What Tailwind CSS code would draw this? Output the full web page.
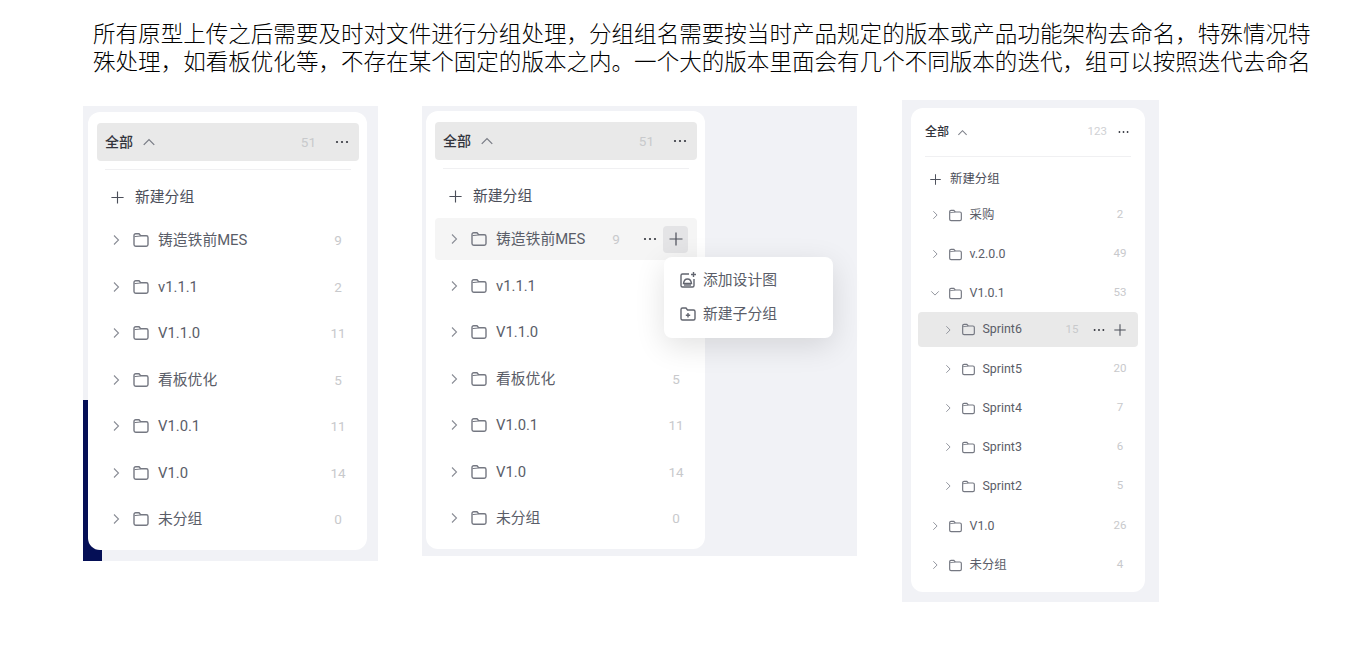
<!DOCTYPE html>
<html lang="zh-CN">
<head>
    <meta charset="UTF-8">
    <title>分组</title>
    <script src="https://cdn.jsdelivr.net/npm/@tailwindcss/browser@4"></script>
</head>
<body class="bg-white h-[652px] overflow-hidden font-[Roboto,'Noto_Sans_CJK_SC',sans-serif]">
    <!-- Intro text -->
    <p class="ml-[93px] pt-[18px] w-[1230px] text-[22.55px] leading-[28px] text-black font-['Noto_Sans_CJK_SC',sans-serif] font-light whitespace-nowrap">所有原型上传之后需要及时对文件进行分组处理&#65292;分组组名需要按当时产品规定的版本或产品功能架构去命名&#65292;特殊情况特<br>殊处理&#65292;如看板优化等&#65292;不存在某个固定的版本之内。一个大的版本里面会有几个不同版本的迭代&#65292;组可以按照迭代去命名</p>

    <div class="flex items-start mt-[26px]">
        <!-- Panel 1 -->
        <div class="relative ml-[83px] mt-[6px] w-[295px] h-[455px] bg-[#f1f2f6] pl-[5px] pt-[6px]">
            <div class="absolute left-0 bottom-0 w-[19px] h-[161px] bg-[#050f56]"></div>
            <div class="relative w-[279px] h-[438px] bg-white rounded-xl pt-[11px]" id="card1"></div>
        </div>

        <!-- Panel 2 -->
        <div class="relative ml-[44px] mt-[6px] w-[435px] h-[450px] bg-[#f1f2f6] pl-[4px] pt-[5px]">
            <div class="w-[279px] h-[438px] bg-white rounded-xl pt-[11px]" id="card2"></div>
            <!-- Popup menu -->
            <div class="absolute left-[242px] top-[151px] w-[169px] h-[81px] bg-white rounded-lg shadow-[0_8px_30px_rgba(0,0,0,0.12)] pt-[6px] pl-[15px] text-[14.8px] text-[#5a5d68]">
                <div class="flex items-center h-[34px] gap-[6px]">
                    <svg class="w-[18px] h-[18px] text-[#62656f]" viewBox="0 0 18 18" fill="none" stroke="currentColor" stroke-width="1.4"><path d="M10 3H3.500A1.500 1.500 0 0 0 2 4.500V14.500A1.500 1.500 0 0 0 3.500 16h10a1.500 1.500 0 0 0 1.500-1.500V8"/><path d="M4.500 12.500c.3-2.500 2-4.500 4-4.500s3.700 2 4 4.500z"/><path d="M5 14h7"/><path d="M14.500 1v5M12 3.500h5"/></svg>
                    <span>添加设计图</span>
                </div>
                <div class="flex items-center h-[34px] gap-[6px]">
                    <svg class="w-[18px] h-[18px] text-[#62656f]" viewBox="0 0 18 18" fill="none" stroke="currentColor" stroke-width="1.4"><path d="M2 4.500A1.500 1.500 0 0 1 3.500 3h3.500l1.500 2h6A1.500 1.500 0 0 1 16 6.500v7a1.500 1.500 0 0 1-1.500 1.500h-11A1.500 1.500 0 0 1 2 13.500z"/><path d="M9 8v4.500M6.800 10.200h4.400"/></svg>
                    <span>新建子分组</span>
                </div>
            </div>
        </div>

        <!-- Panel 3 -->
        <div class="ml-[45px] w-[257px] h-[502px] bg-[#f1f2f6] pl-[9px] pt-[8px]">
            <div class="w-[234px] h-[484px] bg-white rounded-xl pt-[12px]" id="card3"></div>
        </div>
    </div>

    <script>
        const chevronRight = (cls) => `<svg class="${cls} text-[#8a8d96]" viewBox="0 0 12 12" fill="none" stroke="currentColor" stroke-width="1.1"><path d="M4 1.500 8.500 6 4 10.500"/></svg>`;
        const chevronDown = (cls) => `<svg class="${cls} text-[#8a8d96]" viewBox="0 0 12 12" fill="none" stroke="currentColor" stroke-width="1.1"><path d="M1.500 4 6 8.500 10.500 4"/></svg>`;
        const chevronUp = (cls) => `<svg class="${cls} text-[#7a7d86]" viewBox="0 0 12 12" fill="none" stroke="currentColor" stroke-width="1.1"><path d="M1.500 8.500 6 4l4.500 4.500"/></svg>`;
        const folder = (cls) => `<svg class="${cls} text-[#757882]" viewBox="0 0 18 18" fill="none" stroke="currentColor" stroke-width="1.4"><path d="M2 4.500A1.700 1.700 0 0 1 3.700 2.800h3.300l1.700 2h5.600A1.700 1.700 0 0 1 16 6.500v7a1.700 1.700 0 0 1-1.700 1.700H3.700A1.700 1.700 0 0 1 2 13.500z"/><path d="M2.500 5.600 8.500 5" stroke-width="1"/></svg>`;
        const plus = (cls) => `<svg class="${cls} text-[#4b4e59]" viewBox="0 0 16 16" fill="none" stroke="currentColor" stroke-width="1.2"><path d="M8 1.500v13M1.500 8h13"/></svg>`;
        const dots = (cls) => `<svg class="${cls} text-[#33353d]" viewBox="0 0 16 4" fill="currentColor"><circle cx="3" cy="2" r="1.100"/><circle cx="8" cy="2" r="1.100"/><circle cx="13" cy="2" r="1.100"/></svg>`;

        const bigRows = [
            ['铸造铁前MES', 9], ['v1.1.1', 2], ['V1.1.0', 11], ['看板优化', 5],
            ['V1.0.1', 11], ['V1.0', 14], ['未分组', 0]
        ];

        function bigHeader() {
            return `
                <div class="ml-[9px] mr-[8px] h-[38px] flex items-center bg-[#e9e9e9] rounded pl-[8px] pr-[9px]">
                    <span class="text-[14px] font-medium text-[#33353d]">全部</span>
                    ${chevronUp('w-[14px] h-[14px] ml-[9px]')}
                    <span class="ml-auto text-[13.5px] text-[#c8c9cc] mr-[18px]">51</span>
                    ${dots('w-[16px] h-[4px]')}
                </div>
                <div class="ml-[17px] mr-[16px] mt-[8px] h-px bg-[#f0f0f2]"></div>
                <div class="mt-[6px] h-[41px] pt-[1px] flex items-center pl-[22px] text-[14.8px] text-[#4b4e59]">
                    ${plus('w-[15px] h-[15px]')}
                    <span class="ml-[10px]">新建分组</span>
                </div>`;
        }

        function bigRow([name, count], hovered) {
            const actions = hovered ? `
                <span class="w-[20px] text-center text-[13.5px] text-[#c8c9cc] ml-auto mr-[16px]">${count}</span>
                ${dots('w-[16px] h-[4px] mr-[5px]')}
                <span class="w-[25px] h-[27px] mr-[9px] flex items-center justify-center bg-[#e4e4e6] rounded">${plus('w-[16px] h-[16px]')}</span>
            ` : `<span class="w-[30px] text-center text-[13.5px] text-[#c8c9cc] ml-auto mr-[6px]">${count}</span>`;
            return `
                <div class="ml-[9px] mr-[8px] h-[46.5px] flex items-center">
                    <div class="w-full h-[42px] flex items-center rounded pl-[13px] text-[14.8px] text-[#5a5d68] ${hovered ? 'bg-[#f5f5f5]' : ''}">
                        ${chevronRight('w-[12px] h-[12px]')}
                        ${folder('w-[18px] h-[18px] ml-[10px]')}
                        <span class="ml-[8px]">${name}</span>
                        ${actions}
                    </div>
                </div>`;
        }

        document.getElementById('card1').innerHTML = bigHeader() + bigRows.map(r => bigRow(r, false)).join('');
        document.getElementById('card2').innerHTML = bigHeader() + bigRows.map((r, i) => bigRow(r, i === 0)).join('');

        // third panel is scaled down and has a nested group
        const smallRows = [
            { name: '采购', count: 2 },
            { name: 'v.2.0.0', count: 49 },
            { name: 'V1.0.1', count: 53, open: true },
            { name: 'Sprint6', count: 15, sub: true, hovered: true },
            { name: 'Sprint5', count: 20, sub: true },
            { name: 'Sprint4', count: 7, sub: true },
            { name: 'Sprint3', count: 6, sub: true },
            { name: 'Sprint2', count: 5, sub: true, last: true },
            { name: 'V1.0', count: 26 },
            { name: '未分组', count: 4 }
        ];

        function smallRow(r) {
            const actions = r.hovered ? `
                <span class="w-[20px] text-center text-[11.5px] text-[#c8c9cc] ml-auto mr-[10px]">${r.count}</span>
                ${dots('w-[14px] h-[4px] mr-[7px]')}
                ${plus('w-[14px] h-[14px] mr-[11px]')}
            ` : `<span class="w-[24px] text-center text-[11.5px] text-[#c8c9cc] ml-auto mr-[6px]">${r.count}</span>`;
            return `
                <div class="mx-[7px] ${r.hovered ? 'h-[35px] -mt-[0.5px] mb-[2.5px] bg-[#e9e9e9] rounded' : 'h-[39px]'} ${r.last ? 'mb-[1px]' : ''} flex items-center text-[12.4px] text-[#5a5d68] ${r.sub ? 'pl-[25px]' : 'pl-[12px]'}">
                    ${r.open ? chevronDown('w-[10px] h-[10px]') : chevronRight('w-[10px] h-[10px]')}
                    ${folder('w-[15px] h-[15px] ml-[8px]')}
                    <span class="ml-[6.500px]">${r.name}</span>
                    ${actions}
                </div>`;
        }

        document.getElementById('card3').innerHTML = `
            <div class="h-[24px] flex items-center px-[14px]">
                <span class="text-[12px] font-medium text-[#33353d]">全部</span>
                ${chevronUp('w-[11px] h-[11px] ml-[8px]')}
                <span class="ml-auto text-[11.5px] text-[#d0d1d4] mr-[10px]">123</span>
                ${dots('w-[13px] h-[4px] mr-[1px]')}
            </div>
            <div class="mx-[14px] mt-[12px] h-px bg-[#f0f0f2]"></div>
            <div class="mt-[5.5px] h-[33px] flex items-center pl-[18px] text-[12.4px] text-[#4b4e59]">
                ${plus('w-[13px] h-[13px]')}
                <span class="ml-[8px]">新建分组</span>
            </div>` + smallRows.map(smallRow).join('');
    </script>
</body>
</html>
